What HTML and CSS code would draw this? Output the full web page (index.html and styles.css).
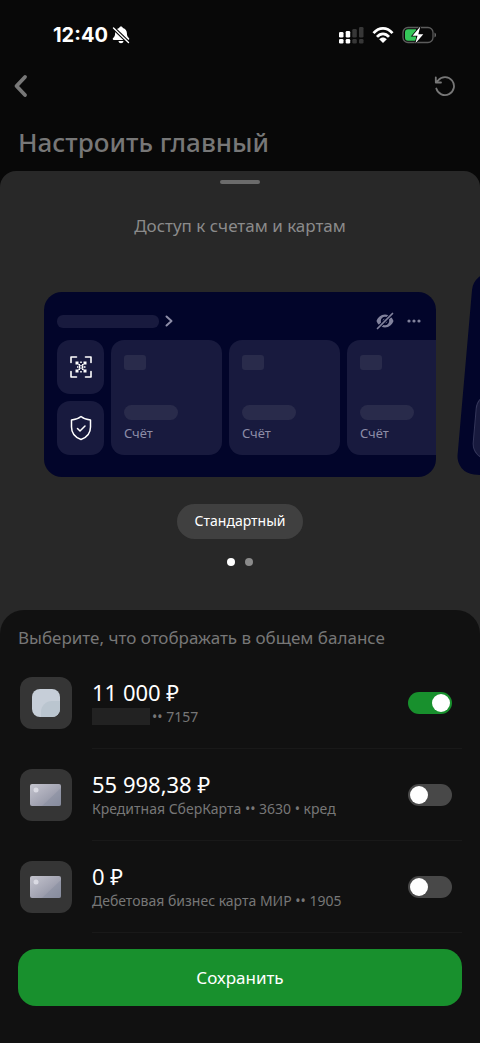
FILE: index.html
```html
<!DOCTYPE html>
<html lang="ru">
<head>
<meta charset="utf-8">
<meta name="viewport" content="width=device-width, initial-scale=1">
<title>Настроить главный</title>
<link rel="stylesheet" href="styles.css">
</head>
<body>
<header class="status">
  <div class="status-group">
    <time class="clock">12:40</time>
    <svg class="bell" viewBox="0 0 18 18" width="18" height="18" aria-hidden="true">
      <path fill="#fff" d="M9 .5c1 0 1.700.6 1.900 1.500 2.600.7 4 2.700 4 5.200 0 2.600.8 3.800 2 4.700.7.600.400 2-.7 2H1.800c-1.100 0-1.400-1.400-.7-2 1.200-.9 2-2.100 2-4.700C3.100 4.700 4.500 2.700 7.100 2 7.300 1.100 8 .5 9 .5zM6.500 15h5c-.2 1.500-1.200 2.200-2.500 2.200S6.700 16.500 6.500 15z"/>
      <path stroke="#080808" stroke-width="3.600" d="M1 1.500l16 15.500"/>
      <path stroke="#fff" stroke-width="1.400" stroke-linecap="round" d="M1.500 2l15 14.500"/>
    </svg>
  </div>
  <div class="status-group indicators">
    <svg viewBox="0 0 25 17" width="25" height="17" aria-hidden="true">
      <g fill="#fff"><rect x="0" y="5" width="4.500" height="5.500" rx="1.300"/><rect x="6.700" y="4" width="4.500" height="6.500" rx="1.300"/><rect x="0" y="12" width="4.500" height="4.500" rx="1.300"/><rect x="6.700" y="12" width="4.500" height="4.500" rx="1.300"/></g>
      <g fill="#373737"><rect x="13.300" y="2" width="4.500" height="8.500" rx="1.300"/><rect x="20" y="0" width="4.500" height="10.500" rx="1.300"/><rect x="13.300" y="12" width="4.500" height="4.500" rx="1.300"/><rect x="20" y="12" width="4.500" height="4.500" rx="1.300"/></g>
    </svg>
    <svg viewBox="0 0 22 17" width="22" height="17" aria-hidden="true">
      <g fill="none" stroke="#fff" stroke-width="2.700"><path d="M1.500 6.200C7-.2 15-.2 20.500 6.200"/><path d="M5 9.800C8.600 5.800 13.400 5.800 17 9.800"/></g>
      <path fill="#fff" d="M7.200 12.200c2.300-2.200 5.300-2.200 7.600 0L11 16z"/>
    </svg>
    <svg viewBox="0 0 35 18" width="35" height="18" aria-hidden="true">
      <rect x="1" y="1.500" width="30" height="15" rx="5" fill="none" stroke="#5c5c5c" stroke-width="1.300"/>
      <path fill="#6a6a6a" d="M32.500 6.500c2 .7 2 4.300 0 5z"/>
      <path fill="#34c759" d="M6 3.300h8V14.700H6a3 3 0 0 1-3-3V6.300a3 3 0 0 1 3-3z"/>
      <path fill="#fff" stroke="#080808" stroke-width="1.600" paint-order="stroke" d="M18.300.5 10.500 9.700h5L13.300 17.500l8-9.300h-5z"/>
    </svg>
  </div>
</header>

<nav class="nav">
  <button class="icon-button" type="button" aria-label="Назад">
    <svg viewBox="0 0 16 24" width="16" height="24"><path d="M12 3 3.500 12 12 21" fill="none" stroke="#777" stroke-width="3.800" stroke-linecap="round" stroke-linejoin="round"/></svg>
  </button>
  <button class="icon-button" type="button" aria-label="Сбросить">
    <svg viewBox="0 0 22 22" width="22" height="22"><path d="M2.300 13.500A9 9 0 1 0 4.100 5.300L2.300 7M1.800 2.300V7.500H7" fill="none" stroke="#777" stroke-width="1.800" stroke-linecap="round" stroke-linejoin="round"/></svg>
  </button>
</nav>
<h1 class="title">Настроить главный</h1>

<main class="sheet">
  <div class="handle"></div>
  <h2 class="subtitle">Доступ к счетам и картам</h2>

  <div class="carousel">
    <section class="slide" aria-label="Стандартный">
      <div class="slide-head">
        <span class="name-skeleton"></span>
        <svg class="chevron" viewBox="0 0 8 12" width="8" height="12" aria-hidden="true"><path d="M1.500 1.500 6.500 6l-5 4.500" fill="none" stroke="#8d8da7" stroke-width="2" stroke-linecap="round" stroke-linejoin="round"/></svg>
        <svg class="eye" viewBox="0 0 18 18" width="18" height="18" aria-hidden="true">
          <path fill="#81829c" fill-rule="evenodd" d="M9 2.500c4.200 0 7.300 3 8.500 6.500-1.200 3.500-4.300 6.500-8.500 6.500S1.700 12.500.5 9C1.700 5.500 4.800 2.500 9 2.500zm0 2.300a4.200 4.200 0 1 0 0 8.400 4.200 4.200 0 0 0 0-8.400z"/>
          <circle cx="9" cy="9" r="2.300" fill="#81829c"/>
          <path stroke="#02052a" stroke-width="3.600" d="M1 17 17 1"/>
          <path stroke="#81829c" stroke-width="1.700" stroke-linecap="round" d="M1.500 16.500 16.500 1.500"/>
        </svg>
        <svg viewBox="0 0 14 4" width="14" height="4" aria-hidden="true"><g fill="#81829c"><circle cx="2" cy="2" r="1.600"/><circle cx="7" cy="2" r="1.600"/><circle cx="12" cy="2" r="1.600"/></g></svg>
      </div>
      <div class="slide-body">
        <div class="tools">
          <div class="tool">
            <svg viewBox="0 0 22 22" width="22" height="22" aria-hidden="true">
              <path d="M1 6.500V1H6.500M15.500 1H21V6.500M21 15.500V21H15.500M6.500 21H1V15.500" fill="none" stroke="#fff" stroke-width="1.600" stroke-linejoin="round" stroke-linecap="round"/>
              <path fill="#fff" d="M5.500 5.500h3v3h-3zM13.500 5.500h3v3h-3zM5.500 13.500h3v3h-3zM13.500 13.500h3v3h-3zM10.200 5.500h1.600v1.500h-1.600zM8.500 8h1.500v1.500H8.500zM12 8h1.500v1.500H12zM7 10.200h1.500v1.600H7zM13.500 10.200h2v1.600h-2zM8.500 12.500H10V14H8.500zM12 12.500h1.500V14H12zM10.200 15h1.600v1.500h-1.600z"/>
              <rect x="9.500" y="9.800" width="3" height="2.300" fill="none" stroke="#fff"/>
            </svg>
          </div>
          <div class="tool">
            <svg viewBox="0 0 22 26" width="22" height="26" aria-hidden="true"><path d="M11 1.500C8 4 4.800 4.800 1.500 5v7c0 6 4 10.500 9.500 12.500 5.500-2 9.500-6.500 9.500-12.500V5C17.200 4.800 14 4 11 1.500zM7.500 13.500l2.500 2.500 5-5" fill="none" stroke="#fff" stroke-width="1.500" stroke-linecap="round" stroke-linejoin="round"/></svg>
          </div>
        </div>
        <div class="account"><span class="logo-skeleton"></span><span class="sum-skeleton"></span><span class="account-name">Счёт</span></div>
        <div class="account"><span class="logo-skeleton"></span><span class="sum-skeleton"></span><span class="account-name">Счёт</span></div>
        <div class="account"><span class="logo-skeleton"></span><span class="sum-skeleton"></span><span class="account-name">Счёт</span></div>
      </div>
    </section>
    <section class="slide slide-next" aria-hidden="true"><div class="next-panel"></div></section>
  </div>

  <button class="mode" type="button">Стандартный</button>
  <div class="dots"><span class="dot dot-active"></span><span class="dot"></span></div>

  <section class="panel">
    <h2 class="panel-title">Выберите, что отображать в общем балансе</h2>
    <div class="row">
      <div class="thumb">
        <svg viewBox="0 0 30 30" width="30" height="30" aria-hidden="true"><rect x="1" y="1" width="28" height="28" rx="8" fill="#c6ced8"/><path d="M10 29V24a11 11 0 0 1 11-11h8v8a8 8 0 0 1-8 8z" fill="#bac5cf"/></svg>
      </div>
      <div class="row-content">
        <label class="row-text" for="acc1"><span class="amount">11 000 ₽</span><span class="detail"><span class="hidden-name"></span>•• 7157</span></label>
        <input class="switch" type="checkbox" id="acc1" checked>
      </div>
    </div>
    <div class="row">
      <div class="thumb">
        <svg viewBox="0 0 32 22" width="32" height="22" aria-hidden="true"><defs><linearGradient id="metal" x1="0" y1="0" x2="1" y2="1"><stop offset="0" stop-color="#c4c4ce"/><stop offset=".5" stop-color="#a6a7b5"/><stop offset="1" stop-color="#85899b"/></linearGradient></defs><rect width="31" height="22" rx="2" fill="url(#metal)"/><path d="M12 22 31 4v16a2 2 0 0 1-2 2z" fill="#888d9f" opacity=".5"/><circle cx="6" cy="6" r="2.500" fill="#dadae3"/></svg>
      </div>
      <div class="row-content">
        <label class="row-text" for="acc2"><span class="amount">55 998,38 ₽</span><span class="detail">Кредитная СберКарта •• 3630 • кред</span></label>
        <input class="switch" type="checkbox" id="acc2">
      </div>
    </div>
    <div class="row">
      <div class="thumb">
        <svg viewBox="0 0 32 22" width="32" height="22" aria-hidden="true"><rect width="31" height="22" rx="2" fill="url(#metal)"/><path d="M12 22 31 4v16a2 2 0 0 1-2 2z" fill="#888d9f" opacity=".5"/><circle cx="6" cy="6" r="2.500" fill="#dadae3"/></svg>
      </div>
      <div class="row-content">
        <label class="row-text" for="acc3"><span class="amount">0 ₽</span><span class="detail">Дебетовая бизнес карта МИР •• 1905</span></label>
        <input class="switch" type="checkbox" id="acc3">
      </div>
    </div>
    <button class="save" type="button">Сохранить</button>
  </section>
</main>
</body>
</html>
```

FILE: styles.css
```css
* { box-sizing: border-box; }

body {
  margin: 0;
  min-height: 100vh;
  display: flex;
  flex-direction: column;
  background: #080808;
  color: #fff;
  font-family: "Noto Sans", "Open Sans", sans-serif;
}

h1, h2 { margin: 0; }
svg { display: block; flex: none; }
button { border: 0; font-family: inherit; cursor: pointer; }

.status {
  display: flex;
  justify-content: space-between;
  align-items: center;
  height: 70px;
  padding: 0 43px 0 53px;
}
.status-group { display: flex; align-items: center; gap: 4px; }
.indicators { gap: 8px; }
.clock { font: 700 20px/24px Inter, sans-serif; }

.nav {
  display: flex;
  justify-content: space-between;
  align-items: center;
  height: 32px;
  padding: 0 24px 0 13px;
}
.icon-button { display: flex; padding: 0; background: none; }

.title {
  padding: 24px 18px 12px;
  color: #777;
  font-size: 26px;
  font-weight: 500;
  line-height: 33px;
}

.sheet {
  flex: 1;
  display: flex;
  flex-direction: column;
  align-items: center;
  border-radius: 16px 16px 0 0;
  background: #282828;
}
.handle {
  width: 40px;
  height: 4px;
  margin-top: 9px;
  border-radius: 2px;
  background: #6b6b6b;
}
.subtitle {
  margin-top: 30px;
  color: #8b8b8b;
  font-size: 17px;
  font-weight: 400;
  line-height: 24px;
}

.carousel {
  display: flex;
  align-items: flex-end;
  align-self: stretch;
  gap: 20px;
  padding: 54px 0 12px 44px;
  overflow: hidden;
}
.slide {
  flex: none;
  width: calc(100% - 44px);
  border-radius: 18px;
  background: #02052a;
  overflow: hidden;
}
.slide-head {
  display: flex;
  align-items: center;
  height: 48px;
  padding: 10px 15px 0 13px;
}
.name-skeleton {
  width: 102px;
  height: 13px;
  margin-right: 6px;
  border-radius: 6px;
  background: #181a3e;
}
.eye { margin: 0 13px 0 auto; }
.slide-body {
  display: flex;
  gap: 7px;
  padding: 0 0 22px 13px;
}
.tools { display: flex; flex-direction: column; gap: 7px; }
.tool {
  display: flex;
  align-items: center;
  justify-content: center;
  width: 47px;
  height: 54px;
  border-radius: 13px;
  background: #181a3e;
}
.account {
  flex: none;
  display: flex;
  flex-direction: column;
  width: 111px;
  padding: 15px 13px 0;
  border-radius: 13px;
  background: #181a3e;
}
.logo-skeleton {
  width: 22px;
  height: 15px;
  border-radius: 3px;
  background: #292b4b;
}
.sum-skeleton {
  width: 54px;
  height: 15px;
  margin-top: 35px;
  border-radius: 8px;
  background: #292b4b;
}
.account-name {
  margin-top: 4px;
  color: #8d8da7;
  font-size: 13px;
  line-height: 18px;
}
.slide-next {
  height: 202px;
  margin: -21px 0 4px;
  padding: 120px 14px 16px;
  transform: rotate(5deg);
  transform-origin: left bottom;
}
.next-panel {
  height: 100%;
  border: 1px solid #34365a;
  border-radius: 16px;
  background: #181a3e;
}

.mode {
  margin-top: 15px;
  padding: 7px 18px 8px;
  border-radius: 18px;
  background: #404040;
  color: #fff;
  font-size: 14px;
  line-height: 20px;
}
.dots { display: flex; gap: 10px; margin: 19px 0 44px; }
.dot { width: 8px; height: 8px; border-radius: 50%; background: #8b8b8b; }
.dot-active { background: #fff; }

.panel {
  flex: 1;
  display: flex;
  flex-direction: column;
  align-self: stretch;
  padding: 16px 18px 36px;
  border-radius: 24px 24px 0 0;
  background: #111;
}
.panel-title {
  margin-bottom: 7px;
  color: #777;
  font-size: 17px;
  font-weight: 400;
  line-height: 24px;
}
.row { display: flex; align-items: center; gap: 20px; padding-left: 2px; }
.thumb {
  flex: none;
  display: flex;
  align-items: center;
  justify-content: center;
  width: 52px;
  height: 52px;
  border-radius: 12px;
  background: #353535;
}
.row-content {
  flex: 1;
  display: flex;
  align-items: center;
  justify-content: space-between;
  height: 92px;
  padding-right: 10px;
  border-bottom: 1px solid #191919;
}
.row-text { display: flex; flex-direction: column; }
.amount { font-size: 22px; line-height: 28px; }
.detail {
  display: flex;
  align-items: center;
  color: #777;
  font-size: 14px;
  line-height: 22px;
}
.hidden-name {
  width: 58px;
  height: 17px;
  margin-right: 2px;
  background: #222;
}

.switch {
  appearance: none;
  flex: none;
  display: flex;
  width: 44px;
  height: 22px;
  margin: 0;
  padding: 2px;
  border-radius: 11px;
  background: #484848;
}
.switch::before {
  content: "";
  width: 18px;
  height: 18px;
  border-radius: 50%;
  background: #fff;
}
.switch:checked { justify-content: flex-end; background: #18902d; }

.save {
  margin-top: 16px;
  padding: 16px;
  border-radius: 18px;
  background: #18902d;
  color: #fff;
  font-size: 17px;
  line-height: 25px;
}
```
